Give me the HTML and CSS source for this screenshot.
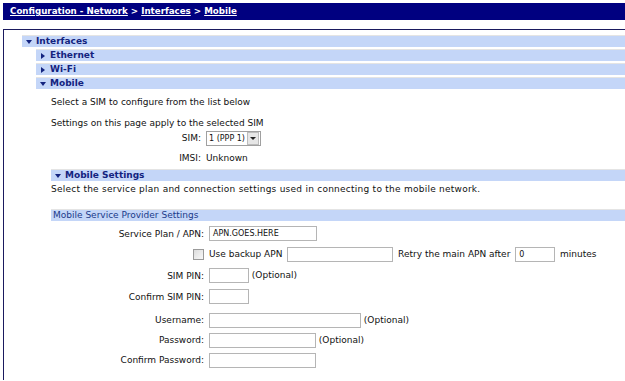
FILE: index.html
```html
<!DOCTYPE html>
<html lang="en">
<head>
  <meta charset="UTF-8" />
  <title>Configuration - Network - Mobile</title>
  <link rel="stylesheet" href="styles.css">
</head>
<body>
  <div class="crumbs">
    <a href="#">Configuration - Network</a> &gt; <a href="#">Interfaces</a> &gt; <a href="#">Mobile</a>
  </div>

  <div class="panel">
    <div class="bar lvl1"><span class="tri down"></span>Interfaces</div>
    <div class="bar lvl2"><span class="tri right"></span>Ethernet</div>
    <div class="bar lvl2"><span class="tri right"></span>Wi-Fi</div>
    <div class="bar lvl2"><span class="tri down"></span>Mobile</div>

    <div class="section">
      <p class="intro">Select a SIM to configure from the list below</p>
      <p class="intro second">Settings on this page apply to the selected SIM</p>
      <table class="sim-table">
        <tr>
          <td class="lbl">SIM:</td>
          <td>
            <span class="select">1 (PPP 1)<span class="drop"><span class="tri-s"></span></span></span>
          </td>
        </tr>
        <tr class="imsi">
          <td class="lbl">IMSI:</td>
          <td>Unknown</td>
        </tr>
      </table>

      <div class="bar sub"><span class="tri down"></span>Mobile Settings</div>
      <p class="desc">Select the service plan and connection settings used in connecting to the mobile network.</p>

      <div class="bar group">Mobile Service Provider Settings</div>
      <table class="form">
        <tr>
          <td class="lbl">Service Plan / APN:</td>
          <td><span class="input w106">APN.GOES.HERE</span></td>
        </tr>
        <tr>
          <td class="lbl"><span class="check"></span></td>
          <td>Use backup APN <span class="input w104 gap"></span> Retry the main APN after <span class="input w38 gap">0</span> minutes</td>
        </tr>
        <tr>
          <td class="lbl">SIM PIN:</td>
          <td><span class="input w38"></span> (Optional)</td>
        </tr>
        <tr>
          <td class="lbl">Confirm SIM PIN:</td>
          <td><span class="input w38"></span></td>
        </tr>
        <tr class="spacer"><td colspan="2"></td></tr>
        <tr class="tight">
          <td class="lbl">Username:</td>
          <td><span class="input w150"></span> (Optional)</td>
        </tr>
        <tr class="tight">
          <td class="lbl">Password:</td>
          <td><span class="input w105"></span> (Optional)</td>
        </tr>
        <tr class="tight">
          <td class="lbl">Confirm Password:</td>
          <td><span class="input w105"></span></td>
        </tr>
      </table>
    </div>
  </div>
</body>
</html>
```

FILE: styles.css
```css
body {
  margin: 3px 0 0 3px;
  font-family: "DejaVu Sans", Verdana, sans-serif;
  font-size: 9px;
  color: #111;
  background: #fff;
  overflow: hidden;
}
.crumbs {
  background: #000080;
  color: #fff;
  font-weight: bold;
  font-size: 8.7px;
  height: 17px;
  line-height: 17px;
  padding-left: 7px;
}
.crumbs a {
  color: #fff;
}
.panel {
  margin-top: 9px;
  border-top: 1px solid #1a1a5e;
  border-left: 1px solid #1a1a5e;
  padding-top: 5px;
  height: 345px;
}
.bar {
  background: #c4d6f8;
  border-top: 1px solid #e4e4e4;
  color: #13237f;
  font-weight: bold;
  height: 11px;
  line-height: 11px;
  margin-bottom: 2px;
  display: flex;
  align-items: center;
}
.lvl1 {
  margin-left: 18px;
}
.lvl2 {
  margin-left: 32px;
}
.tri {
  display: inline-block;
  width: 0;
  height: 0;
  margin: 0 4px 0 4px;
}
.tri.down {
  border-left: 3px solid transparent;
  border-right: 3px solid transparent;
  border-top: 4px solid #13237f;
}
.tri.right {
  border-top: 3px solid transparent;
  border-bottom: 3px solid transparent;
  border-left: 4px solid #13237f;
  margin-left: 5px;
  margin-right: 5px;
}
.section {
  margin-left: 47px;
}
.intro {
  margin: 8px 0 0 0;
  line-height: 11px;
}
.intro.second {
  margin-top: 10px;
}
.sim-table {
  border-collapse: collapse;
  margin-top: 1px;
}
.sim-table td {
  padding: 0;
  height: 16px;
}
.sim-table .lbl {
  width: 150px;
  text-align: right;
  padding-right: 5px;
}
.sim-table .imsi td {
  height: 23px;
}
.select {
  display: inline-flex;
  align-items: center;
  border: 1px solid #a0a0a0;
  height: 13px;
  padding-left: 2px;
  font-size: 8px;
}
.drop {
  display: inline-flex;
  align-items: center;
  justify-content: center;
  width: 10px;
  height: 11px;
  margin: 0 1px 0 2px;
  background: #e6e6e6;
  border: 1px solid #bcbcbc;
}
.tri-s {
  border-left: 3px solid transparent;
  border-right: 3px solid transparent;
  border-top: 3px solid #222;
}
.bar.sub {
  margin-top: 0;
}
.desc {
  margin: 3px 0 0 0;
  line-height: 11px;
  letter-spacing: 0.25px;
}
.bar.group {
  margin-top: 14px;
  font-weight: normal;
  color: #1b3a8a;
  padding-left: 2px;
}
.form {
  border-collapse: collapse;
  margin-top: 2px;
}
.form td {
  padding: 0;
  height: 21px;
  white-space: nowrap;
}
.form .tight td {
  height: 20px;
}
.form .spacer td {
  height: 3px;
}
.form .lbl {
  width: 153px;
  text-align: right;
  padding-right: 5px;
}
.input {
  display: inline-block;
  vertical-align: middle;
  height: 13px;
  line-height: 13px;
  border: 1px solid #b5b5b5;
  font-size: 8px;
  padding-left: 3px;
  box-sizing: content-box;
}
.input.gap {
  margin: 0 2px;
}
.w106 { width: 103px; }
.w104 { width: 101px; }
.w38 { width: 35px; }
.w150 { width: 147px; }
.w105 { width: 102px; }
.check {
  display: inline-block;
  vertical-align: middle;
  width: 9px;
  height: 9px;
  border: 1px solid #9a9a9a;
  background: linear-gradient(135deg, #dcdcdc, #f8f8f8);
}
```
